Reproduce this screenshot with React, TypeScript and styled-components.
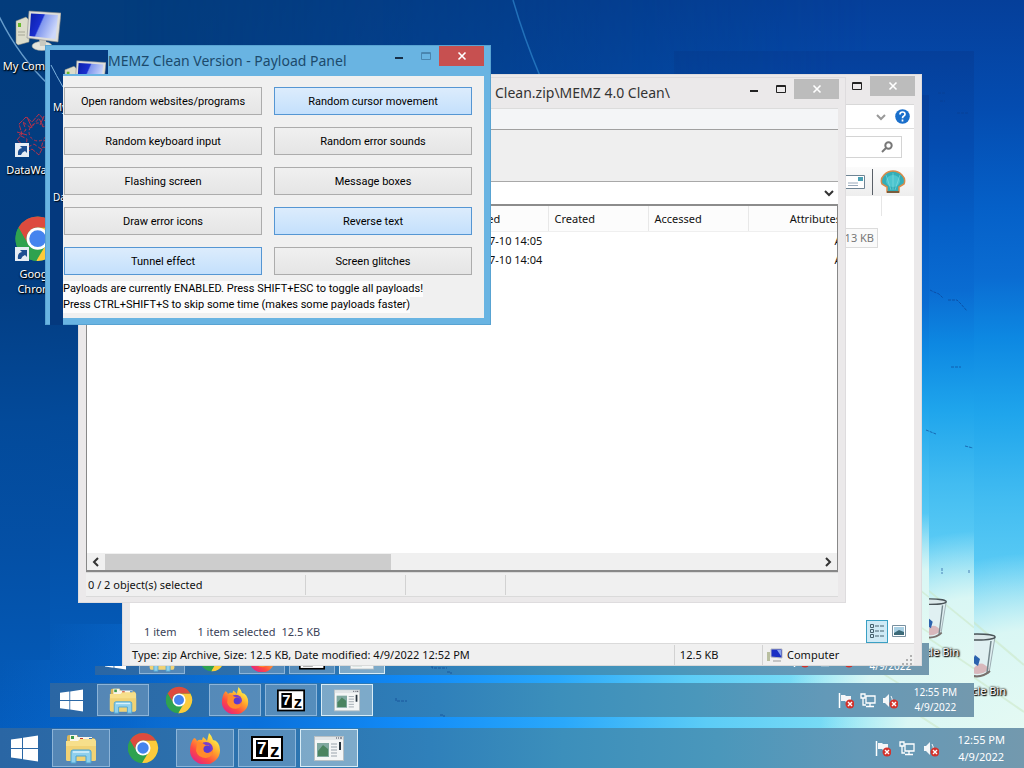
import React from "react";
import styled, { createGlobalStyle, css } from "styled-components";

const UI = `"Noto Sans", "Open Sans", sans-serif`;
const DIALOG = `Roboto, "Liberation Sans", sans-serif`;

const GlobalStyle = createGlobalStyle`
  * { box-sizing: border-box; }
  body { margin: 0; overflow: hidden; font-family: ${UI}; font-size: 11px; color: #111; }
  button { font: inherit; color: inherit; padding: 0; margin: 0; border: 0; background: none; }
  svg { display: block; flex: none; }
`;

/* ---------- desktop ---------- */

const Screen = styled.div<{ $inset?: string; $clip?: string }>`
  display: flex;
  flex-direction: column;
  overflow: hidden;
  background: #03468f;
  clip-path: ${(p) => p.$clip ?? "none"};
  ${(p) =>
    p.$inset
      ? css`position: absolute; inset: ${p.$inset};`
      : css`position: relative; min-height: 100vh;`}
`;

const Sky = styled.div`
  position: absolute;
  inset: 0;
  background: linear-gradient(180deg, #033c7c 0%, #033e84 38%, #034a9a 55%, #0450a6 72%, #0458b4 86%, #0560c4 100%);
  &::before {
    content: "";
    position: absolute;
    inset: 0;
    background: linear-gradient(180deg, #053f9a 0%, #044cb0 14%, #0560c8 27%, #0a6cd2 36%, #0d88e2 44%, #1fa5ec 54%, #42bcf1 65%, #5cccf5 75%, #7cdaf6 82%, #a8ecf6 100%);
    mask-image: linear-gradient(90deg, transparent 12%, rgba(0, 0, 0, 0.5) 50%, #000 85%);
  }
  &::after {
    content: "";
    position: absolute;
    inset: 0;
    background:
      radial-gradient(ellipse 21% 25% at 101% 97%, #e6faf3 0%, rgba(222, 248, 244, 0.95) 60%, rgba(190, 240, 246, 0) 100%),
      linear-gradient(90deg, rgba(4, 90, 190, 0) 0%, #0a70da 25%, #128cf8 40%, #2aa8fa 55%, #5cccf6 69%, rgba(124, 224, 246, 0.8) 84%, rgba(220, 250, 245, 0) 100%) 0 100% / 100% 14% no-repeat;
  }
`;

const Drawing = styled.svg`
  position: absolute;
  inset: 0;
  width: 100%;
  height: 100%;
  pointer-events: none;
`;

const Canvas = styled.div`
  position: relative;
  flex: 1;
`;

const IconColumn = styled.div`
  position: absolute;
  left: 0;
  top: 8px;
  width: 76px;
  display: flex;
  flex-direction: column;
  gap: 29px;
`;

const Shortcut = styled.a`
  position: relative;
  display: flex;
  flex-direction: column;
  align-items: center;
  min-height: 75px;
  gap: 4px;
  color: #fff;
  line-height: 15px;
  text-align: center;
  text-decoration: none;
  text-shadow: 0 1px 2px #000, 1px 1px 1px #000;
`;

const Bin = styled(Shortcut)<{ $small?: boolean }>`
  position: absolute;
  right: ${(p) => (p.$small ? "15px" : "18px")};
  bottom: ${(p) => (p.$small ? "24px" : "30px")};
  white-space: nowrap;
  min-height: 0;
  text-shadow: 0 0 2px #000, 1px 1px 1px #000, 1px 0 2px #000;
`;

/* ---------- taskbar ---------- */

const TaskbarBar = styled.footer<{ $h: number }>`
  position: relative;
  display: flex;
  align-items: stretch;
  height: ${(p) => p.$h}px;
  color: #fff;
  background: linear-gradient(90deg, #2a66a4 0%, #2c74b0 28%, #2f80ba 42%, #3c8fbb 55%, #4a97bb 70%, #6399b8 84%, #7399ae 100%);
`;

const StartButton = styled.button<{ $w: number }>`
  width: ${(p) => p.$w}px;
  display: grid;
  place-items: center;
`;

const Apps = styled.nav`
  display: flex;
  gap: 4px;
  padding: 1px 4px;
`;

const AppButton = styled.button<{ $w: number; $state?: "open" | "active" }>`
  width: ${(p) => p.$w}px;
  display: grid;
  place-items: center;
  border: 1px solid transparent;
  ${(p) => p.$state === "open" && css`background: rgba(150, 180, 205, 0.4); border-color: rgba(170, 205, 235, 0.65);`}
  ${(p) => p.$state === "active" && css`background: rgba(175, 200, 215, 0.62); border-color: #d8ecf6;`}
`;

const Tray = styled.div<{ $size: "l" | "m" | "s" }>`
  margin-left: auto;
  display: flex;
  align-items: center;
  gap: ${(p) => (p.$size === "l" ? 8 : 6)}px;
  padding-right: ${(p) => (p.$size === "l" ? 19 : 17)}px;
`;

const Clock = styled.div<{ $size: "l" | "m" | "s" }>`
  margin-left: 10px;
  text-align: center;
  font-size: ${(p) => (p.$size === "l" ? 11 : 10)}px;
  line-height: ${(p) => (p.$size === "l" ? 17 : 15)}px;
`;

/* ---------- window parts ---------- */

const Window = styled.section<{ $x: number; $y: number; $w: number; $h: number; $tone?: "accent" | "plain" }>`
  position: absolute;
  left: ${(p) => p.$x}px;
  top: ${(p) => p.$y}px;
  width: ${(p) => p.$w}px;
  height: ${(p) => p.$h}px;
  display: flex;
  flex-direction: column;
  background: ${(p) => (p.$tone === "accent" ? "#69b4e2" : "#ebe9ea")};
  box-shadow: ${(p) => (p.$tone === "accent" ? "inset 0 0 0 1px #58a3d2" : "inset 0 0 0 1px #dedcde")};
`;

const TitleBar = styled.header<{ $h: number }>`
  display: flex;
  align-items: flex-start;
  height: ${(p) => p.$h}px;
  flex: none;
`;

const Title = styled.h1<{ $indent: number; $color: string }>`
  flex: 1;
  margin: 0;
  padding-left: ${(p) => p.$indent}px;
  font-size: 14px;
  font-weight: 400;
  line-height: 32px;
  white-space: nowrap;
  color: ${(p) => p.$color};
`;

const Controls = styled.div<{ $top: number; $right: number }>`
  display: flex;
  padding: ${(p) => p.$top}px ${(p) => p.$right}px 0 0;
`;

const ControlButton = styled.button<{ $close?: string }>`
  width: ${(p) => (p.$close ? 45 : 27)}px;
  height: 20px;
  display: grid;
  place-items: center;
  background: ${(p) => p.$close ?? "none"};
`;

const ClientArea = styled.div`
  position: relative;
  display: flex;
  flex-direction: column;
  flex: 1;
  margin: 0 8px;
  min-height: 0;
  background: #fff;
`;

const BottomFrame = styled.div`
  height: 6px;
  flex: none;
`;

/* payload dialog */
const Payloads = styled.div`
  position: relative;
  flex: 1;
  margin: 0 7px 7px 18px;
  padding: 11px 12px 0 1px;
  background: #f0f0f0;
  font-family: ${DIALOG};
  color: #000;
`;

const PayloadGrid = styled.div`
  display: grid;
  grid-template-columns: 1fr 1fr;
  gap: 12px;
`;

const PayloadButton = styled.button<{ $on?: boolean }>`
  height: 28px;
  border: 1px solid ${(p) => (p.$on ? "#5596d3" : "#acacac")};
  background: ${(p) => (p.$on ? "linear-gradient(#dcecfc, #c4e0fc)" : "linear-gradient(#f0f0f0, #e5e5e5)")};
`;

const Hint = styled.p`
  margin: 6px 0 0 -1px;
  line-height: 16px;
  white-space: nowrap;
  span { display: block; width: max-content; background: #fcfcfc; }
`;

const Leak = styled.div<{ $w: number; $h: number }>`
  position: absolute;
  left: 5px;
  top: 5px;
  width: ${(p) => p.$w}px;
  height: ${(p) => p.$h}px;
  overflow: hidden;
  background: #04397e;
  color: #fff;
`;

const LeakLabel = styled.span<{ $y: number }>`
  position: absolute;
  left: 3px;
  top: ${(p) => p.$y}px;
  font-size: 10px;
  text-shadow: 1px 1px 1px #000;
  white-space: nowrap;
`;

/* archive window */
const MenuStrip = styled.div`
  height: 22px;
  background: #f4f5f7;
  border-top: 1px solid #dcdcdc;
  border-bottom: 1px solid #a0a0a0;
`;
const ToolStrip = styled.div`
  height: 52px;
  background: #efefef;
  border-bottom: 1px solid #a8a8a8;
`;
const PathRow = styled.div`
  display: flex;
  justify-content: flex-end;
  align-items: center;
  height: 24px;
  padding-right: 4px;
  border-bottom: 2px solid #8c8c8c;
`;
const ListPane = styled.div`
  flex: 1;
  overflow: hidden;
  border-left: 1px solid #888;
  border-right: 1px solid #888;
`;
const FileTable = styled.table`
  table-layout: fixed;
  width: 761px;
  border-collapse: collapse;
  color: #111;
  th { height: 25px; padding: 0 6px; font-weight: 400; text-align: left; background: #fcfcfc; border-right: 1px solid #e8e8e8; border-bottom: 1px solid #efefef; }
  td { height: 19px; padding: 0 6px; white-space: nowrap; }
  th:last-child, td:last-child { text-align: right; }
`;
const ScrollRow = styled.div`
  display: flex;
  align-items: center;
  height: 19px;
  background: #f0f0f0;
  border: 1px solid #888;
  border-top: 0;
  border-bottom-width: 2px;
`;
const ScrollArrow = styled.button`
  width: 18px;
  height: 17px;
  display: grid;
  place-items: center;
`;
const ScrollTrack = styled.div`
  flex: 1;
  height: 16px;
`;
const ScrollThumb = styled.div`
  width: 40%;
  height: 100%;
  background: #cdcdcd;
`;
const StatusRow = styled.div<{ $h: number }>`
  display: flex;
  align-items: center;
  height: ${(p) => p.$h}px;
  background: #f0f0f0;
  border-top: 1px solid #dadada;
  border-bottom: 1px solid #dadada;
`;
const StatusCell = styled.div<{ $w?: number }>`
  display: flex;
  align-items: center;
  gap: 4px;
  height: 20px;
  padding-left: 2px;
  white-space: nowrap;
  ${(p) => (p.$w ? css`width: ${p.$w}px; border-right: 1px solid #d2d2d2;` : css`flex: 1;`)}
`;

/* explorer window */
const RibbonRow = styled.div`
  display: flex;
  justify-content: flex-end;
  align-items: center;
  gap: 9px;
  height: 25px;
  padding-right: 4px;
  border-top: 1px solid #d8d8d8;
  border-bottom: 1px solid #dcdcdc;
`;
const SearchRow = styled.div`
  display: flex;
  justify-content: flex-end;
  padding: 7px 12px 9px;
`;
const SearchBox = styled.label`
  display: flex;
  align-items: center;
  width: 180px;
  height: 22px;
  padding-right: 8px;
  border: 1px solid #d4d4d4;
  input { flex: 1; min-width: 0; border: 0; outline: 0; background: none; }
`;
const ShellRow = styled.div`
  display: flex;
  justify-content: flex-end;
  align-items: center;
  gap: 7px;
  height: 29px;
  padding-right: 8px;
  background: linear-gradient(#fbfbfb, #eeeeee);
`;
const Divider = styled.span`
  width: 1px;
  height: 26px;
  background: #5a6068;
`;
const ColumnEdge = styled.div`
  width: 752px;
  height: 20px;
  border-right: 1px solid #e6e6e6;
`;
const SizeCell = styled.div`
  align-self: flex-start;
  width: 748px;
  height: 20px;
  margin-top: 12px;
  padding-right: 3px;
  border: 1px solid #dcdcdc;
  background: #fafafa;
  color: #777;
  line-height: 18px;
  text-align: right;
`;
const Details = styled.div`
  display: flex;
  align-items: center;
  margin-top: auto;
  height: 24px;
  padding: 0 4px 0 14px;
  gap: 6px;
  color: #3a4258;
`;
const FirstDetail = styled.span`
  margin-right: 15px;
`;
const ViewButtons = styled.div`
  display: flex;
  margin-left: auto;
`;
const ViewButton = styled.button<{ $on?: boolean }>`
  width: 22px;
  height: 23px;
  display: grid;
  place-items: center;
  ${(p) => p.$on && css`border: 1px solid #3aa0c4; background: #cfeaf6;`}
`;
const Grip = styled.div`
  padding-right: 2px;
  align-self: flex-end;
`;

/* ---------- drawings ---------- */

type Size = { s?: number };

const WindowsLogo = ({ s = 27 }: Size) => (
  <svg width={s} height={s} viewBox="0 0 27 27" fill="#fff">
    <path d="M0 4.5 11 3v10H0zM12 2.8 27 .5V13H12zM0 14h11v10L0 22.5zM12 14h15v12.5L12 24.2z" />
  </svg>
);

const FolderIcon = ({ s = 32 }: Size) => (
  <svg width={s} height={s} viewBox="0 0 32 32">
    <path d="M2 5q0-2 2-2h8l2 3h14q2 0 2 2v20H2z" fill="#d9b65a" />
    <path d="M5 3h7v7H5zM12 5h15v6H12z" fill="#faf6ea" />
    <path d="M6 4h3v3H6z" fill="#3c9a4a" />
    <path d="M15 6h3v2h-3z" fill="#c8402c" />
    <path d="M24 6h3v2h-3z" fill="#3078c0" />
    <path d="M1 9h12l2-2h15l1 2v18q0 2-2 2H3q-2 0-2-2z" fill="#f7df8b" />
    <path d="M1 14h30v13q0 2-2 2H3q-2 0-2-2z" fill="#f1d275" />
    <path d="M6 31V20q0-2 2-2h16q2 0 2 2v11h-5v-7H11v7z" fill="#8fd0ee" stroke="#4ba3d0" />
    <path d="M8 20h16" stroke="#d9f2fc" strokeWidth="1.5" />
  </svg>
);

const ChromeIcon = ({ s = 32 }: Size) => (
  <svg width={s} height={s} viewBox="0 0 32 32">
    <circle cx="16" cy="16" r="15" fill="#2fa24f" />
    <path d="M16 16V8.5h13A15 15 0 0 1 15 31l7-11.500z" fill="#fccb3c" />
    <path d="M3 8.500A15 15 0 0 1 29 8.500H16A7.500 7.500 0 0 0 9.300 19.600z" fill="#dd4b3e" />
    <path d="M3 8.500 9.500 19.700A7.500 7.500 0 0 0 18 23.300L15 31A15 15 0 0 1 3 8.500z" fill="#2fa24f" />
    <circle cx="16" cy="16" r="7.500" fill="#fff" />
    <circle cx="16" cy="16" r="5.700" fill="#4584ee" />
  </svg>
);

const FirefoxIcon = ({ s = 32 }: Size) => (
  <svg width={s} height={s} viewBox="0 0 32 32">
    <defs>
      <linearGradient id="fox" x1="0.9" y1="0.05" x2="0.2" y2="1">
        <stop offset="0.1" stopColor="#fff04a" />
        <stop offset="0.4" stopColor="#ffa62c" />
        <stop offset="0.7" stopColor="#ff4a42" />
        <stop offset="1" stopColor="#e0208a" />
      </linearGradient>
    </defs>
    <path d="M5 6q2 0 3 3 2-2 5-1l1-3q3 2 4 4l2-8q3 3 4 7 3 0 5 3 2 3 2 7a15 14 0 0 1-30 1Q1 11 5 6z" fill="url(#fox)" />
    <circle cx="17" cy="17" r="7" fill="#7a3ecb" />
    <path d="M8 11q4-2 7 1 2 2 5 1-1 3-5 3-1 4 3 5 4 0 6-4 1 8-7 9-8 0-10-7z" fill="#ff8a2c" />
    <circle cx="18" cy="17" r="3.500" fill="#5a3ad0" />
  </svg>
);

const ZipIcon = ({ s = 32, plain }: Size & { plain?: boolean }) => (
  <svg width={s} height={s} viewBox="0 0 32 32">
    <rect x="0" y="4" width="32" height="25" fill="#000" />
    <rect x="2" y="6" width="28" height="21" fill="#fff" />
    <rect x="5" y="8" width="12" height="17" fill="#000" />
    {!plain && (
      <>
        <text x="6" y="22" fontFamily="Liberation Sans" fontWeight="700" fontSize="17" fill="#fff">7</text>
        <text x="19" y="25" fontFamily="Liberation Sans" fontWeight="700" fontSize="19" fill="#000">z</text>
      </>
    )}
  </svg>
);

const AppIcon = ({ s = 30 }: Size) => (
  <svg width={s} height={s} viewBox="0 0 30 30">
    <rect x="0.5" y="3.500" width="29" height="24" fill="#f4f6f6" stroke="#b8c0c4" />
    <path d="M1 4h28v3H1z" fill="#e2e6e8" />
    <path d="M22 5h1m1 0h1m1 0h2" stroke="#445" />
    <rect x="3" y="10" width="12" height="14" fill="#7fa8a0" />
    <path d="M4 18 9 12l5 4v7H4z" fill="#4a8460" />
    <path d="M17 11h6m-6 3h6m-6 3h6m-6 3h6m-6 3h6" stroke="#9aa4ac" />
    <path d="M26 9v8" stroke="#26323c" strokeWidth="2" />
  </svg>
);

const ComputerIcon = ({ s = 46 }: Size) => (
  <svg width={s} height={s} viewBox="0 0 46 46">
    <defs>
      <linearGradient id="lcd" x1="0" y1="0" x2="1" y2="0.4">
        <stop offset="0" stopColor="#0a1fa8" />
        <stop offset="0.45" stopColor="#1a2fd0" />
        <stop offset="0.5" stopColor="#7f96ee" />
        <stop offset="1" stopColor="#cdd8fb" />
      </linearGradient>
    </defs>
    <path d="m1 13 10-4 4 4-1 21-11 3-2-2z" fill="#dcdccb" stroke="#8c8d7c" strokeWidth="0.500" />
    <path d="M3 15h3v4H3z" fill="#66b82c" />
    <path d="M3 24h7m-7 3h7" stroke="#a8a898" />
    <ellipse cx="27" cy="38" rx="10" ry="4.500" fill="#e3e3dc" stroke="#a4a49a" strokeWidth="0.500" />
    <path d="M24 30h7v8h-6z" fill="#c9c9c0" />
    <path d="m14 3 32 2-3 29-31-4z" fill="#dededa" stroke="#8a8a88" strokeWidth="0.600" />
    <path d="m16 5.500 27 1.500-2.500 24L14.500 28z" fill="url(#lcd)" />
  </svg>
);

const arrow = (
  <>
    <rect x="0" y="31" width="14" height="14" fill="#e6edf5" />
    <path d="M3 43q-1-6 4-7l-2-2h7v7l-2-2q-3 1-4 4z" fill="#1d4f92" />
  </>
);

const DataIcon = () => (
  <svg width="46" height="46" viewBox="0 0 46 46">
    <g fill="none" stroke="#b8324a" strokeWidth="1">
      <path d="m4 12 7-7 6 5 7-8 6 7 8-3-4 9 7 7-7 6 3 9-9-2-4 8-7-6-8 5-1-9-6-5 5-6z" strokeDasharray="5 1" />
      <path d="m8 10 8 6 8-10 4 9 8-4-5 9 6 7-9 2-2 8-7-5-8 4 1-9-8-4 7-5z" strokeDasharray="4 2" />
      <circle cx="23" cy="20" r="9" strokeDasharray="3 2" />
      <path d="m2 20 10 3m0-18 5 11m12-12-4 9" />
    </g>
    {arrow}
  </svg>
);

const ChromeShortcut = () => (
  <svg width="46" height="46" viewBox="0 0 46 46">
    <g transform="translate(-1 -1) scale(1.48)">
      <ChromeIcon s={32} />
    </g>
    {arrow}
  </svg>
);

const BinIcon = ({ s = 40 }: Size) => (
  <svg width={s} height={s + 6} viewBox="0 0 40 46" preserveAspectRatio="none">
    <path d="M2 4h36l-6 36q-12 6-24 0z" fill="rgba(225,238,242,0.75)" stroke="#9cacb2" />
    <ellipse cx="20" cy="4" rx="18" ry="3" fill="#dbe8ea" stroke="#4a5458" strokeWidth="1.500" />
    <path d="M15 38q8-14 17-2-7 7-17 4z" fill="#d8b8bc" />
    <path d="m18 22 5 4-2 7-6-4z" fill="#2b62ae" />
    <path d="m34 8-4 32" stroke="#74868c" strokeWidth="1.500" />
    <path d="M10 41q13 6 23-3" stroke="#78706c" fill="none" strokeWidth="2" />
  </svg>
);

const Cross = () => (
  <g>
    <circle cx="12" cy="12" r="4.500" fill="#d2322c" />
    <path d="m10 10 4 4m0-4-4 4" stroke="#fff" strokeWidth="1.400" />
  </g>
);
const FlagIcon = () => (
  <svg width="16" height="17" viewBox="0 0 16 17">
    <path d="M1.500 1v15" stroke="#fff" strokeWidth="1.500" />
    <path d="M3 3h4l1 1h5v6H8L7 9H3z" fill="#f4f6f8" />
    <Cross />
  </svg>
);
const NetworkIcon = () => (
  <svg width="16" height="17" viewBox="0 0 16 17" fill="none" stroke="#fff" strokeWidth="1.300">
    <path d="M6 4h9v7H6zM10 11v3M6 14.500h8" />
    <path d="M1 2h4v4H1zM3 6v7h3" />
  </svg>
);
const SoundIcon = () => (
  <svg width="16" height="17" viewBox="0 0 16 17">
    <path d="M1 6h2l4-4v13l-4-4H1z" fill="#f4f6f8" />
    <path d="M9 4q2 3 1 6" stroke="#f4f6f8" fill="none" />
    <Cross />
  </svg>
);

const Minimize = ({ c = "#222" }: { c?: string }) => (
  <svg width="10" height="10" viewBox="0 0 10 10"><path d="M1 7h8" stroke={c} strokeWidth="2" /></svg>
);
const Maximize = ({ c = "#222" }: { c?: string }) => (
  <svg width="10" height="10" viewBox="0 0 10 10"><path d="M.5 1.500h9v7h-9zM.5 2.500h9" stroke={c} fill="none" /></svg>
);
const Close = () => (
  <svg width="10" height="10" viewBox="0 0 10 10"><path d="m1.500 1.500 7 7m0-7-7 7" stroke="#fff" strokeWidth="1.600" /></svg>
);
const Chevron = ({ d, c = "#333" }: { d: string; c?: string }) => (
  <svg width="10" height="10" viewBox="0 0 10 10"><path d={d} stroke={c} fill="none" strokeWidth="2" /></svg>
);

/* ---------- composed pieces ---------- */

const sizes = {
  l: { bar: 40, start: 48, app: 58, icon: 32 },
  m: { bar: 34, start: 43, app: 52, icon: 28 },
  s: { bar: 32, start: 40, app: 46, icon: 26 },
};

function Taskbar({ size }: { size: "l" | "m" | "s" }) {
  const z = sizes[size];
  return (
    <TaskbarBar $h={z.bar}>
      <StartButton $w={z.start} aria-label="Start"><WindowsLogo s={z.icon - 5} /></StartButton>
      <Apps>
        <AppButton $w={z.app} $state="open" aria-label="File Explorer"><FolderIcon s={z.icon} /></AppButton>
        <AppButton $w={z.app} aria-label="Chrome"><ChromeIcon s={z.icon} /></AppButton>
        <AppButton $w={z.app} $state="open" aria-label="Firefox"><FirefoxIcon s={z.icon} /></AppButton>
        <AppButton $w={z.app} $state="open" aria-label="7-Zip"><ZipIcon s={z.icon} plain={size === "s"} /></AppButton>
        <AppButton $w={z.app} $state="active" aria-label="MEMZ"><AppIcon s={z.icon - 2} /></AppButton>
      </Apps>
      <Tray $size={size}>
        <FlagIcon />
        <NetworkIcon />
        <SoundIcon />
        <Clock $size={size}>12:55 PM<br />4/9/2022</Clock>
      </Tray>
    </TaskbarBar>
  );
}

function Wallpaper() {
  return (
    <>
      <Sky />
      <Drawing viewBox="0 0 1024 768" preserveAspectRatio="none" fill="none">
        <path d="M-2 14Q18 56 50 86T120 150" stroke="#7fb4e0" strokeWidth="1.500" opacity="0.800" />
        <path d="M513 0Q524 38 540 76" stroke="#2f86cc" strokeWidth="1.500" opacity="0.700" />
        <path d="M900 560 1024 665M920 640 1024 712M880 690 1000 768" stroke="#c9e6c0" strokeWidth="2" opacity="0.500" />
      </Drawing>
    </>
  );
}

const payloads: [string, boolean][] = [
  ["Open random websites/programs", false],
  ["Random cursor movement", true],
  ["Random keyboard input", false],
  ["Random error sounds", false],
  ["Flashing screen", false],
  ["Message boxes", false],
  ["Draw error icons", false],
  ["Reverse text", true],
  ["Tunnel effect", true],
  ["Screen glitches", false],
];

function ExplorerWindow() {
  return (
    <Window $x={122} $y={74} $w={800} $h={592}>
      <TitleBar $h={30}>
        <Title $indent={0} $color="#333" />
        <Controls $top={2} $right={7}>
          <ControlButton aria-label="Maximize"><Maximize /></ControlButton>
          <ControlButton $close="#bcbcbc" aria-label="Close"><Close /></ControlButton>
        </Controls>
      </TitleBar>
      <ClientArea>
        <RibbonRow>
          <Chevron d="m1 3 4 4 4-4" c="#999" />
          <svg width="15" height="15" viewBox="0 0 15 15">
            <circle cx="7.500" cy="7.500" r="7.300" fill="#1a6fcb" />
            <path d="M5 5.500q0-2.500 2.500-2.500T10 5.300q0 1.300-1.500 2-1 .6-1 1.900M7.500 10.500v2" stroke="#fff" strokeWidth="1.700" fill="none" />
          </svg>
        </RibbonRow>
        <SearchRow>
          <SearchBox>
            <input aria-label="Search" />
            <svg width="12" height="12" viewBox="0 0 12 12" fill="none" stroke="#777" strokeWidth="2">
              <circle cx="7.500" cy="4.500" r="3.200" /><path d="M5 7 1 11" />
            </svg>
          </SearchBox>
        </SearchRow>
        <ShellRow>
          <svg width="24" height="14" viewBox="0 0 24 14">
            <path d="M.5.500h23v13H.5z" fill="#fff" stroke="#6f8494" />
            <path d="M17 2h5v4h-5z" fill="#4aa0b4" /><path d="M7 8h10M7 10.500h10" stroke="#9ab" />
          </svg>
          <Divider />
          <svg width="26" height="24" viewBox="0 0 26 24">
            <path d="M7 17 2 14Q0 9 4 5q4-4 9-4t9 4q4 4 2 9l-5 3v5H7z" fill="#32adb8" stroke="#d98b4a" strokeWidth="1.500" />
            <ellipse cx="13" cy="11" rx="7" ry="6" fill="#5fd6de" opacity="0.600" />
            <path d="M13 20V3M11 20 6 5m9 15 5-15" stroke="#8fe0e2" opacity="0.500" />
            <path d="M7 22h12" stroke="#7a5c3c" strokeWidth="2" />
          </svg>
        </ShellRow>
        <ColumnEdge />
        <SizeCell>13 KB</SizeCell>
        <Details>
          <FirstDetail>1 item</FirstDetail>
          <span>1 item selected</span>
          <span>12.5 KB</span>
          <ViewButtons>
            <ViewButton $on aria-label="Details view">
              <svg width="16" height="16" viewBox="0 0 16 16" fill="none" stroke="#45606e">
                <path d="M1.500 1.500h3v3h-3zM1.500 6.500h3v3h-3zM1.500 11.500h3v3h-3z" />
                <path d="M6 3h10M6 8h10M6 13h10" strokeDasharray="4 1" />
              </svg>
            </ViewButton>
            <ViewButton aria-label="Thumbnail view">
              <svg width="14" height="12" viewBox="0 0 14 12">
                <path d="M.5.500h13v11H.5z" fill="#fff" stroke="#7890a0" />
                <path d="M2 2h10v8H2z" fill="#a9d0e4" /><path d="m2 8 5-3 5 2v3H2z" fill="#3c6a78" />
              </svg>
            </ViewButton>
          </ViewButtons>
        </Details>
        <StatusRow $h={23}>
          <StatusCell $w={545}>Type: zip Archive, Size: 12.5 KB, Date modified: 4/9/2022 12:52 PM</StatusCell>
          <StatusCell $w={88}>&nbsp;12.5 KB</StatusCell>
          <StatusCell>
            <svg width="18" height="14" viewBox="-2 0 18 14">
              <path d="M0 4h3v9H0z" fill="#b9bfa0" />
              <path d="m4 1 11 0v9l-11-1z" fill="#1a2fc4" stroke="#b4b8c0" /><path d="m10 2 4 0v6z" fill="#8aa4ee" />
              <path d="M6 13h8" stroke="#999" />
            </svg>
            Computer
          </StatusCell>
          <Grip>
            <svg width="10" height="10" viewBox="0 0 10 10" fill="#b0b0b0">
              <path d="M8 0h2v2H8zM8 4h2v2H8zM8 8h2v2H8zM4 4h2v2H4zM4 8h2v2H4zM0 8h2v2H0z" />
            </svg>
          </Grip>
        </StatusRow>
      </ClientArea>
    </Window>
  );
}

function ArchiveWindow() {
  return (
    <Window $x={78} $y={77} $w={768} $h={526}>
      <TitleBar $h={31}>
        <Title $indent={417} $color="#333">Clean.zip\MEMZ 4.0 Clean\</Title>
        <Controls $top={2} $right={7}>
          <ControlButton aria-label="Minimize"><Minimize /></ControlButton>
          <ControlButton aria-label="Maximize"><Maximize /></ControlButton>
          <ControlButton $close="#bcbcbc" aria-label="Close"><Close /></ControlButton>
        </Controls>
      </TitleBar>
      <ClientArea>
        <MenuStrip />
        <ToolStrip />
        <PathRow><Chevron d="m1 3 4 4 4-4" /></PathRow>
        <ListPane>
          <FileTable>
            <colgroup>
              <col style={{ width: 361 }} /><col style={{ width: 100 }} /><col style={{ width: 100 }} /><col style={{ width: 100 }} /><col />
            </colgroup>
            <thead>
              <tr><th /><th>Modified</th><th>Created</th><th>Accessed</th><th>Attributes</th></tr>
            </thead>
            <tbody>
              <tr><td /><td>2020-07-10 14:05</td><td /><td /><td>A</td></tr>
              <tr><td /><td>2020-07-10 14:04</td><td /><td /><td>A</td></tr>
            </tbody>
          </FileTable>
        </ListPane>
        <ScrollRow>
          <ScrollArrow aria-label="Scroll left"><Chevron d="M7 1 3 5l4 4" /></ScrollArrow>
          <ScrollTrack><ScrollThumb /></ScrollTrack>
          <ScrollArrow aria-label="Scroll right"><Chevron d="m3 1 4 4-4 4" /></ScrollArrow>
        </ScrollRow>
        <StatusRow $h={25}>
          <StatusCell $w={220}>0 / 2 object(s) selected</StatusCell>
          <StatusCell $w={100} />
          <StatusCell $w={100} />
          <StatusCell />
        </StatusRow>
      </ClientArea>
      <BottomFrame />
    </Window>
  );
}

function PayloadWindow() {
  return (
    <Window $x={45} $y={45} $w={446} $h={280} $tone="accent">
      <Leak $w={58} $h={24}>
        <Drawing viewBox="0 0 58 24" fill="none"><path d="M1 13Q6 25 14 36" stroke="#7fb4e0" /></Drawing>
        <Drawing viewBox="-14 -8 58 24"><ComputerIcon s={42} /></Drawing>
      </Leak>
      <Leak $w={13} $h={275}>
        <Drawing viewBox="0 0 13 275" fill="none"><path d="M1 15q5 10 12 22" stroke="#7fb4e0" /></Drawing>
        <LeakLabel $y={50}>My</LeakLabel>
        <LeakLabel $y={140}>Da</LeakLabel>
      </Leak>
      <TitleBar $h={31}>
        <Title $indent={63} $color="#1c4a6c">MEMZ Clean Version - Payload Panel</Title>
        <Controls $top={1} $right={7}>
          <ControlButton aria-label="Minimize"><Minimize c="#183048" /></ControlButton>
          <ControlButton aria-label="Maximize"><Maximize c="#4a86b0" /></ControlButton>
          <ControlButton $close="#c75050" aria-label="Close"><Close /></ControlButton>
        </Controls>
      </TitleBar>
      <Payloads>
        <PayloadGrid>
          {payloads.map(([name, on]) => (
            <PayloadButton key={name} $on={on}>{name}</PayloadButton>
          ))}
        </PayloadGrid>
        <Hint>
          <span>Payloads are currently ENABLED. Press SHIFT+ESC to toggle all payloads!</span>
          <span>Press CTRL+SHIFT+S to skip some time (makes some payloads faster)</span>
        </Hint>
      </Payloads>
    </Window>
  );
}

export default function App() {
  return (
    <>
      <GlobalStyle />
      <Screen as="main">
        <Wallpaper />
        <Canvas>
          <IconColumn>
            <Shortcut href="#computer"><ComputerIcon />My Computer</Shortcut>
            <Shortcut href="#data"><DataIcon />DataWarrior</Shortcut>
            <Shortcut href="#chrome"><ChromeShortcut />Google<br />Chrome</Shortcut>
          </IconColumn>
          <Bin href="#bin"><BinIcon />Recycle Bin</Bin>
        </Canvas>
        <Taskbar size="l" />
        <Screen
          $inset="51px 50px"
          $clip="polygon(0 23px, 624px 23px, 624px 0, 100% 0, 100% 100%, 0 100%)"
        >
          <Wallpaper />
          <Canvas>
            <Bin href="#bin-echo" $small><BinIcon s={36} />Recycle Bin</Bin>
          </Canvas>
          <Taskbar size="m" />
          <Screen
            $inset="44px 45px 42px"
            $clip="polygon(0 calc(100% - 9px), 27px calc(100% - 9px), 27px 0, 100% 0, 100% 100%, 0 100%)"
          >
            <Wallpaper />
            <Canvas />
            <Taskbar size="s" />
          </Screen>
        </Screen>
        <Drawing viewBox="0 0 1024 768" preserveAspectRatio="none" fill="none">
          <path
            d="M396 698v3h11M440 715h4v2M432 666v2h15M447 672h4v2M930 290l4 2 5 2 4 4M948 300h9l4 4 6 7M951 367h10M957 113h12M938 93h7M940 101h5M926 430l10 4M965 446l8 2M942 568v6M969 570v3"
            stroke="#0a3c8c"
            strokeDasharray="3 1"
            opacity="0.600"
          />
        </Drawing>
        <ExplorerWindow />
        <ArchiveWindow />
        <PayloadWindow />
      </Screen>
    </>
  );
}
